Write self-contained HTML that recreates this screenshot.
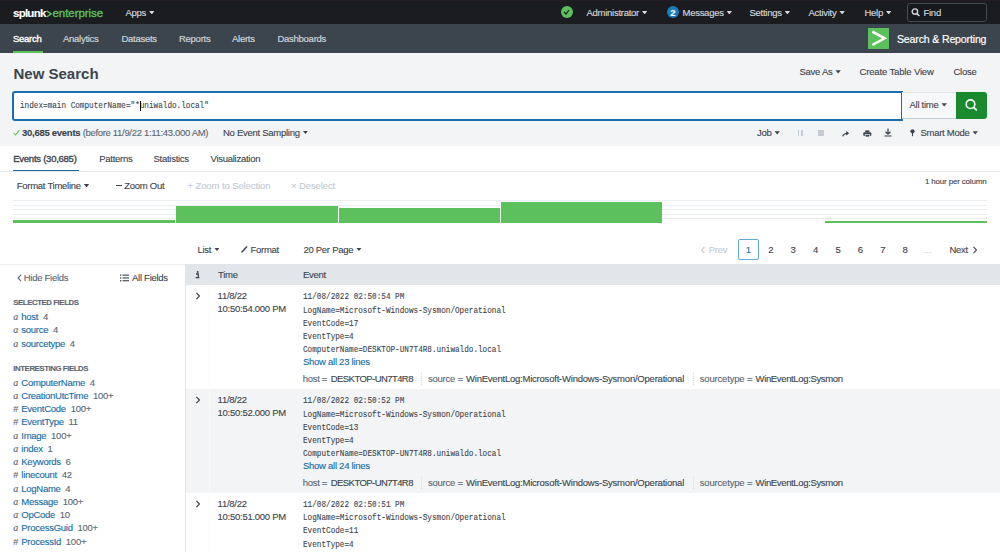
<!DOCTYPE html>
<html><head><meta charset="utf-8">
<style>
*{margin:0;padding:0;box-sizing:border-box}
html,body{width:1000px;height:552px;overflow:hidden;background:#fff;font-family:"Liberation Sans",sans-serif;font-size:9.5px;letter-spacing:-0.27px;color:#3c444d;-webkit-text-stroke:0.12px currentColor}
.a{position:absolute;white-space:nowrap;line-height:12px}
.m{font-family:"Liberation Mono",monospace;font-size:9.6px;letter-spacing:0;color:#3c444d;transform:scaleX(0.8);transform-origin:0 0}
.car{display:inline-block;width:5.4px;height:3.4px;background:currentColor;clip-path:polygon(0 0,100% 0,50% 100%);vertical-align:middle;margin-left:3px;position:relative;top:-0.6px}
#top{position:absolute;left:0;top:0;width:1000px;height:24px;background:#1a1c20}
#nav{position:absolute;left:0;top:24px;width:1000px;height:29px;background:#3c444d}
#pg{position:absolute;left:0;top:53px;width:1000px;height:93px;background:#f2f4f5}
.tb{color:#d3d8dd;-webkit-text-stroke:0.15px #d3d8dd}
.nv{color:#cdd3d9;-webkit-text-stroke:0.2px #cdd3d9}
.lk{color:#166ca5}
.mu{color:#5c6773}
</style></head><body>
<div id="top"></div><div style="position:absolute;left:0;top:0;width:1000px;height:1px;background:#221e24"></div>
<div id="nav"></div>
<div id="pg"></div>

<!-- top bar -->
<div class="a" style="left:13px;top:6.5px;font-size:11.5px;font-weight:700;letter-spacing:-0.75px;color:#fff">splunk</div>
<svg style="position:absolute;left:46px;top:10px" width="6" height="8" viewBox="0 0 6 8"><path d="M0.6 0.8 L5.2 3.9 L0.6 7" stroke="#5cc05c" stroke-width="1.4" fill="none"/></svg>
<div class="a" style="left:52.5px;top:6.5px;font-size:11.5px;letter-spacing:-0.05px;color:#5cc05c;-webkit-text-stroke:0.35px #5cc05c">enterprise</div>
<div class="a tb" style="left:125.5px;top:6.8px">Apps<span class="car"></span></div>

<div style="position:absolute;left:560.5px;top:6px;width:12px;height:12px;border-radius:50%;background:#5cc05c"></div>
<svg style="position:absolute;left:563px;top:9px" width="7" height="6" viewBox="0 0 7 6"><path d="M1 3 L3 5 L6 1" stroke="#1a1c20" stroke-width="1.2" fill="none"/></svg>
<div class="a tb" style="left:586.5px;top:6.8px">Administrator<span class="car"></span></div>
<div style="position:absolute;left:666.5px;top:5.8px;width:12.5px;height:12.5px;border-radius:50%;background:#1a7bbd;color:#fff;font-size:9.5px;font-weight:700;line-height:13.5px;text-align:center">2</div>
<div class="a tb" style="left:682.5px;top:6.8px">Messages<span class="car"></span></div>
<div class="a tb" style="left:749.5px;top:6.8px">Settings<span class="car"></span></div>
<div class="a tb" style="left:808.5px;top:6.8px">Activity<span class="car"></span></div>
<div class="a tb" style="left:864.5px;top:6.8px">Help<span class="car"></span></div>
<div style="position:absolute;left:907px;top:3px;width:80px;height:19px;border:1px solid #454c55;border-radius:3px;background:#171a1d"></div>
<svg style="position:absolute;left:911px;top:8px" width="10" height="10" viewBox="0 0 10 10"><circle cx="3.9" cy="3.6" r="2.7" stroke="#d3d8dd" stroke-width="1.4" fill="none"/><path d="M5.9 5.6 L8.4 8" stroke="#d3d8dd" stroke-width="1.6"/></svg>
<div class="a tb" style="left:923.5px;top:6.8px">Find</div>

<!-- nav -->
<div class="a" style="left:13px;top:32.5px;color:#fff;-webkit-text-stroke:0.35px #fff">Search</div>
<div style="position:absolute;left:12.5px;top:51px;width:30px;height:2px;background:#5cc05c"></div>
<div class="a nv" style="left:63px;top:32.5px">Analytics</div>
<div class="a nv" style="left:121.5px;top:32.5px">Datasets</div>
<div class="a nv" style="left:179px;top:32.5px">Reports</div>
<div class="a nv" style="left:232px;top:32.5px">Alerts</div>
<div class="a nv" style="left:277.5px;top:32.5px">Dashboards</div>
<div style="position:absolute;left:868px;top:28px;width:21px;height:21px;background:#5cc05c"></div>
<svg style="position:absolute;left:868px;top:28px" width="21" height="21" viewBox="0 0 21 21"><path d="M4.3 3.6 L16.6 10.3 L4.3 17" stroke="#fff" stroke-width="2.5" fill="none"/></svg>
<div class="a" style="left:897px;top:32.6px;color:#fff;font-size:10.5px;letter-spacing:-0.13px;-webkit-text-stroke:0.2px #fff">Search &amp; Reporting</div>


<!-- page header -->
<div class="a" style="left:13.5px;top:65px;font-size:15px;font-weight:700;letter-spacing:0;line-height:18px;-webkit-text-stroke:0">New Search</div>
<div class="a" style="left:799.5px;top:66px">Save As<span class="car"></span></div>
<div class="a" style="left:859.5px;top:66px;letter-spacing:-0.15px">Create Table View</div>
<div class="a" style="left:953.5px;top:66px">Close</div>

<div style="position:absolute;left:11.5px;top:90.5px;width:891px;height:30px;border:2px solid #1a6fae;border-radius:3px 0 0 3px;background:#fff"></div>
<div class="a m" style="left:19.5px;top:100.2px">index=main ComputerName="*uniwaldo.local"</div>
<div style="position:absolute;left:140px;top:100.5px;width:1px;height:10.5px;background:#000"></div>
<div style="position:absolute;left:902px;top:92px;width:55px;height:26.5px;background:#f7f8fa;border-top:1px solid #e1e6eb;border-bottom:1px solid #c3cbd4"></div>
<div class="a" style="left:909.5px;top:99px">All time<span class="car"></span></div>
<div style="position:absolute;left:956.3px;top:92px;width:30.7px;height:26.5px;background:#1a8a2e;border-radius:0 3px 3px 0"></div>
<svg style="position:absolute;left:963px;top:97px" width="16" height="16" viewBox="0 0 16 16"><circle cx="7.5" cy="7.2" r="4.3" stroke="#fff" stroke-width="1.6" fill="none"/><path d="M10.6 10.3 L13.8 13.4" stroke="#fff" stroke-width="1.8"/></svg>

<svg style="position:absolute;left:12.5px;top:129px" width="7" height="7" viewBox="0 0 7 7"><path d="M0.7 4 L2.5 6 L6.3 1" stroke="#5cc05c" stroke-width="1.1" fill="none"/></svg>
<div class="a" style="left:22px;top:126.5px"><b>30,685 events</b> <span class="mu" style="letter-spacing:-0.32px">(before 11/9/22 1:11:43.000 AM)</span></div>
<div class="a" style="left:223px;top:126.5px">No Event Sampling<span class="car"></span></div>
<div class="a" style="left:757px;top:127px">Job<span class="car"></span></div>
<div style="position:absolute;left:797.5px;top:129.5px;width:1.5px;height:6px;background:#c3cbd4"></div>
<div style="position:absolute;left:801px;top:129.5px;width:1.5px;height:6px;background:#c3cbd4"></div>
<div style="position:absolute;left:818px;top:129.5px;width:6px;height:6px;background:#c3cbd4"></div>
<svg style="position:absolute;left:841.5px;top:130px" width="8" height="7" viewBox="0 0 8 7"><path d="M0.8 6.3 Q1.5 3.3 5.5 3.3" stroke="#3c444d" stroke-width="1.3" fill="none"/><path d="M4.2 1 L7.2 3.3 L4.2 5.6 Z" fill="#3c444d"/></svg>
<svg style="position:absolute;left:862.5px;top:129.5px" width="9" height="8" viewBox="0 0 9 8"><rect x="2.2" y="0.4" width="4.2" height="2" fill="#3c444d"/><rect x="0.3" y="2.3" width="8" height="3.6" rx="1" fill="#3c444d"/><rect x="2.2" y="4.6" width="4.2" height="2.4" fill="#3c444d" stroke="#f2f4f5" stroke-width="0.7"/></svg>
<svg style="position:absolute;left:883.5px;top:128px" width="8" height="9" viewBox="0 0 8 9"><path d="M4 0.5 V6 M1.5 3.8 L4 6.2 L6.5 3.8 M0.5 8 H7.5" stroke="#3c444d" stroke-width="1.2" fill="none"/></svg>
<svg style="position:absolute;left:910px;top:129px" width="5" height="8" viewBox="0 0 5 8"><circle cx="2.5" cy="2.3" r="2.1" fill="#3c444d"/><path d="M2.5 3.5 V7.2" stroke="#3c444d" stroke-width="1.1"/></svg>
<div class="a" style="left:920.5px;top:127px">Smart Mode<span class="car"></span></div>

<!-- tabs -->
<div class="a" style="left:13.25px;top:153px;letter-spacing:-0.25px;-webkit-text-stroke:0.35px #3c444d">Events (30,685)</div>
<div style="position:absolute;left:12.5px;top:169.5px;width:66.5px;height:2px;background:#1a6fae"></div>
<div class="a" style="left:99.25px;top:153px">Patterns</div>
<div class="a" style="left:153.5px;top:153px">Statistics</div>
<div class="a" style="left:210.5px;top:153px">Visualization</div>
<div style="position:absolute;left:0;top:171.2px;width:1000px;height:1px;background:#e3e7eb"></div>

<!-- timeline toolbar -->
<div class="a" style="left:16.75px;top:179.8px">Format Timeline<span class="car"></span></div>
<div style="position:absolute;left:115.75px;top:184.8px;width:6px;height:1.2px;background:#3c444d"></div>
<div class="a" style="left:124.25px;top:179.8px">Zoom Out</div>
<div class="a" style="left:187.5px;top:179.8px;color:#c3cbd4;letter-spacing:-0.1px">+ Zoom to Selection</div>
<div class="a" style="left:291px;top:179.8px;color:#c3cbd4;letter-spacing:-0.1px">&#215; Deselect</div>
<div class="a" style="left:925px;top:176.2px;font-size:8px;letter-spacing:-0.18px">1 hour per column</div>

<!-- timeline -->
<div style="position:absolute;left:13px;top:200px;width:974px;height:1px;background:#eceff2"></div>
<div style="position:absolute;left:13px;top:204.6px;width:974px;height:1px;background:#eceff2"></div>
<div style="position:absolute;left:13px;top:209.2px;width:974px;height:1px;background:#eceff2"></div>
<div style="position:absolute;left:13px;top:213.8px;width:974px;height:1px;background:#eceff2"></div>
<div style="position:absolute;left:13px;top:218.4px;width:974px;height:1px;background:#eceff2"></div>
<div style="position:absolute;left:13px;top:220.3px;width:162px;height:2.7px;background:#5cc05c"></div>
<div style="position:absolute;left:175.8px;top:205.6px;width:162px;height:17.4px;background:#5cc05c"></div>
<div style="position:absolute;left:338.6px;top:208px;width:161px;height:15px;background:#5cc05c"></div>
<div style="position:absolute;left:500.8px;top:202.4px;width:161.2px;height:20.6px;background:#5cc05c"></div>
<div style="position:absolute;left:825.4px;top:220.6px;width:161.6px;height:2.4px;background:#5cc05c"></div>

<!-- results toolbar -->
<div class="a" style="left:197.5px;top:243.5px">List<span class="car"></span></div>
<svg style="position:absolute;left:240.5px;top:245px" width="7" height="8" viewBox="0 0 7 8"><path d="M1 7 L6 1.5" stroke="#3c444d" stroke-width="1.5"/><path d="M0.5 7.5 L1.5 6" stroke="#3c444d" stroke-width="1"/></svg>
<div class="a" style="left:250.5px;top:243.5px">Format</div>
<div class="a" style="left:303.4px;top:243.5px">20 Per Page<span class="car"></span></div>

<svg style="position:absolute;left:699.5px;top:246px" width="6" height="8" viewBox="0 0 6 8"><path d="M4.5 0.8 L1.5 4 L4.5 7.2" stroke="#c3cbd4" stroke-width="1.1" fill="none"/></svg>
<div class="a" style="left:708.8px;top:243.5px;color:#c3cbd4">Prev</div>
<div style="position:absolute;left:737.6px;top:239px;width:21.4px;height:21px;border:1px solid #5fa9d9;border-radius:2px"></div>
<div class="a" style="left:737.6px;top:243.5px;width:21.4px;text-align:center;color:#1a6fae">1</div>
<div class="a" style="left:760px;top:243.5px;width:21.4px;text-align:center">2</div>
<div class="a" style="left:782.4px;top:243.5px;width:21.4px;text-align:center">3</div>
<div class="a" style="left:804.8px;top:243.5px;width:21.4px;text-align:center">4</div>
<div class="a" style="left:827.2px;top:243.5px;width:21.4px;text-align:center">5</div>
<div class="a" style="left:849.6px;top:243.5px;width:21.4px;text-align:center">6</div>
<div class="a" style="left:872px;top:243.5px;width:21.4px;text-align:center">7</div>
<div class="a" style="left:894.4px;top:243.5px;width:21.4px;text-align:center">8</div>
<div class="a" style="left:916.8px;top:243.5px;width:21.4px;text-align:center;color:#c3cbd4">...</div>
<div class="a" style="left:949.4px;top:243.5px">Next</div>
<svg style="position:absolute;left:972px;top:246px" width="6" height="8" viewBox="0 0 6 8"><path d="M1.5 0.8 L4.5 4 L1.5 7.2" stroke="#3c444d" stroke-width="1.1" fill="none"/></svg>


<!-- table -->
<div style="position:absolute;left:186px;top:264px;width:814px;height:22px;background:#e1e6eb"></div>
<svg style="position:absolute;left:195px;top:270.5px" width="5" height="8" viewBox="0 0 5 8"><circle cx="2.6" cy="1.1" r="1" fill="#3c444d"/><path d="M1 3 H3.3 V6.4 M0.6 6.7 H4.4" stroke="#3c444d" stroke-width="1.3" fill="none"/></svg>
<div class="a" style="left:218px;top:268.5px">Time</div>
<div class="a" style="left:303px;top:268.5px">Event</div>
<div style="position:absolute;left:186px;top:285px;width:814px;height:104px;background:#fff;"></div>
<div style="position:absolute;left:209px;top:286px;width:1px;height:103px;background:#f9fafa"></div>
<svg style="position:absolute;left:194.5px;top:292px" width="6" height="8" viewBox="0 0 6 8"><path d="M1.3 0.8 L4.5 4 L1.3 7.2" stroke="#3c444d" stroke-width="1.2" fill="none"/></svg>
<div class="a" style="left:217.6px;top:290px">11/8/22</div>
<div class="a" style="left:217.6px;top:303.4px">10:50:54.000 PM</div>
<div class="a m" style="left:303px;top:291.2px">11/08/2022 02:50:54 PM</div>
<div class="a m" style="left:303px;top:304.5px">LogName=Microsoft-Windows-Sysmon/Operational</div>
<div class="a m" style="left:303px;top:317.8px">EventCode=17</div>
<div class="a m" style="left:303px;top:331.1px">EventType=4</div>
<div class="a m" style="left:303px;top:344.4px">ComputerName=DESKTOP-UN7T4R8.uniwaldo.local</div>
<div class="a lk" style="left:303px;top:355.6px">Show all 23 lines</div>
<div class="a mu" style="left:302.8px;top:373.0px;letter-spacing:-0.32px">host =</div>
<div class="a" style="left:330.8px;top:373.0px;letter-spacing:-0.57px">DESKTOP-UN7T4R8</div>
<div class="a mu" style="left:428px;top:373.0px;letter-spacing:-0.24px">source =</div>
<div class="a" style="left:466px;top:373.0px;letter-spacing:-0.22px">WinEventLog:Microsoft-Windows-Sysmon/Operational</div>
<div class="a mu" style="left:699.7px;top:373.0px;letter-spacing:-0.17px">sourcetype =</div>
<div class="a" style="left:755.6px;top:373.0px;letter-spacing:-0.36px">WinEventLog:Sysmon</div>
<div style="position:absolute;left:421.2px;top:372.1px;width:0;height:13px;border-left:1px dotted #d5dbe0"></div>
<div style="position:absolute;left:692.6px;top:372.1px;width:0;height:13px;border-left:1px dotted #d5dbe0"></div>
<div style="position:absolute;left:186px;top:389px;width:814px;height:104px;background:#f2f4f5;"></div>
<div style="position:absolute;left:209px;top:390px;width:1px;height:103px;background:#f9fafa"></div>
<svg style="position:absolute;left:194.5px;top:396px" width="6" height="8" viewBox="0 0 6 8"><path d="M1.3 0.8 L4.5 4 L1.3 7.2" stroke="#3c444d" stroke-width="1.2" fill="none"/></svg>
<div class="a" style="left:217.6px;top:394px">11/8/22</div>
<div class="a" style="left:217.6px;top:407.4px">10:50:52.000 PM</div>
<div class="a m" style="left:303px;top:395.2px">11/08/2022 02:50:52 PM</div>
<div class="a m" style="left:303px;top:408.5px">LogName=Microsoft-Windows-Sysmon/Operational</div>
<div class="a m" style="left:303px;top:421.8px">EventCode=13</div>
<div class="a m" style="left:303px;top:435.1px">EventType=4</div>
<div class="a m" style="left:303px;top:448.4px">ComputerName=DESKTOP-UN7T4R8.uniwaldo.local</div>
<div class="a lk" style="left:303px;top:459.6px">Show all 24 lines</div>
<div class="a mu" style="left:302.8px;top:477.0px;letter-spacing:-0.32px">host =</div>
<div class="a" style="left:330.8px;top:477.0px;letter-spacing:-0.57px">DESKTOP-UN7T4R8</div>
<div class="a mu" style="left:428px;top:477.0px;letter-spacing:-0.24px">source =</div>
<div class="a" style="left:466px;top:477.0px;letter-spacing:-0.22px">WinEventLog:Microsoft-Windows-Sysmon/Operational</div>
<div class="a mu" style="left:699.7px;top:477.0px;letter-spacing:-0.17px">sourcetype =</div>
<div class="a" style="left:755.6px;top:477.0px;letter-spacing:-0.36px">WinEventLog:Sysmon</div>
<div style="position:absolute;left:421.2px;top:476.1px;width:0;height:13px;border-left:1px dotted #d5dbe0"></div>
<div style="position:absolute;left:692.6px;top:476.1px;width:0;height:13px;border-left:1px dotted #d5dbe0"></div>
<div style="position:absolute;left:186px;top:492.5px;width:814px;height:104px;background:#fff;"></div>
<div style="position:absolute;left:209px;top:493.5px;width:1px;height:103px;background:#f9fafa"></div>
<svg style="position:absolute;left:194.5px;top:499.5px" width="6" height="8" viewBox="0 0 6 8"><path d="M1.3 0.8 L4.5 4 L1.3 7.2" stroke="#3c444d" stroke-width="1.2" fill="none"/></svg>
<div class="a" style="left:217.6px;top:497.5px">11/8/22</div>
<div class="a" style="left:217.6px;top:510.9px">10:50:51.000 PM</div>
<div class="a m" style="left:303px;top:498.7px">11/08/2022 02:50:51 PM</div>
<div class="a m" style="left:303px;top:512.0px">LogName=Microsoft-Windows-Sysmon/Operational</div>
<div class="a m" style="left:303px;top:525.3px">EventCode=11</div>
<div class="a m" style="left:303px;top:538.6px">EventType=4</div>
<div class="a m" style="left:303px;top:551.9px">ComputerName=DESKTOP-UN7T4R8.uniwaldo.local</div>
<div class="a lk" style="left:303px;top:563.1px">Show all 24 lines</div>
<div class="a mu" style="left:302.8px;top:580.5px;letter-spacing:-0.32px">host =</div>
<div class="a" style="left:330.8px;top:580.5px;letter-spacing:-0.57px">DESKTOP-UN7T4R8</div>
<div class="a mu" style="left:428px;top:580.5px;letter-spacing:-0.24px">source =</div>
<div class="a" style="left:466px;top:580.5px;letter-spacing:-0.22px">WinEventLog:Microsoft-Windows-Sysmon/Operational</div>
<div class="a mu" style="left:699.7px;top:580.5px;letter-spacing:-0.17px">sourcetype =</div>
<div class="a" style="left:755.6px;top:580.5px;letter-spacing:-0.36px">WinEventLog:Sysmon</div>
<div style="position:absolute;left:421.2px;top:579.6px;width:0;height:13px;border-left:1px dotted #d5dbe0"></div>
<div style="position:absolute;left:692.6px;top:579.6px;width:0;height:13px;border-left:1px dotted #d5dbe0"></div>
<div style="position:absolute;left:185px;top:264px;width:1px;height:288px;background:#e1e6eb"></div>

<!-- sidebar -->
<div style="position:absolute;left:0;top:264px;width:185px;height:1px;background:#eceff2"></div>
<div style="position:absolute;left:185px;top:264px;width:1px;height:288px;background:#e1e6eb"></div>
<svg style="position:absolute;left:16.5px;top:274px" width="5" height="8" viewBox="0 0 5 8"><path d="M4 0.8 L1 4 L4 7.2" stroke="#5c6773" stroke-width="1.1" fill="none"/></svg>
<div class="a mu" style="left:23.75px;top:272px">Hide Fields</div>
<svg style="position:absolute;left:119.5px;top:274px" width="9" height="8" viewBox="0 0 9 8"><rect x="0" y="0.5" width="1.3" height="1.3" fill="#3c444d"/><rect x="0" y="3.3" width="1.3" height="1.3" fill="#3c444d"/><rect x="0" y="6.1" width="1.3" height="1.3" fill="#3c444d"/><rect x="2.5" y="0.6" width="6.5" height="1.1" fill="#3c444d"/><rect x="2.5" y="3.4" width="6.5" height="1.1" fill="#3c444d"/><rect x="2.5" y="6.2" width="6.5" height="1.1" fill="#3c444d"/></svg>
<div class="a" style="left:132px;top:272px">All Fields</div>
<div class="a" style="left:13.3px;top:297.2px;font-size:7.8px;font-weight:700;letter-spacing:-0.42px;color:#5c6773">SELECTED FIELDS</div>
<div class="a" style="left:13.3px;top:311.0px"><span style="font-family:Liberation Serif;font-style:italic;font-size:10px;color:#5c6773;letter-spacing:0">a</span></div><div class="a" style="left:21.3px;top:311.0px"><span class="lk">host</span>&nbsp; <span class="mu">4</span></div>
<div class="a" style="left:13.3px;top:324.3px"><span style="font-family:Liberation Serif;font-style:italic;font-size:10px;color:#5c6773;letter-spacing:0">a</span></div><div class="a" style="left:21.3px;top:324.3px"><span class="lk">source</span>&nbsp; <span class="mu">4</span></div>
<div class="a" style="left:13.3px;top:337.6px"><span style="font-family:Liberation Serif;font-style:italic;font-size:10px;color:#5c6773;letter-spacing:0">a</span></div><div class="a" style="left:21.3px;top:337.6px"><span class="lk">sourcetype</span>&nbsp; <span class="mu">4</span></div>
<div class="a" style="left:13.3px;top:363.2px;font-size:7.8px;font-weight:700;letter-spacing:-0.42px;color:#5c6773">INTERESTING FIELDS</div>
<div class="a" style="left:13.3px;top:376.6px"><span style="font-family:Liberation Serif;font-style:italic;font-size:10px;color:#5c6773;letter-spacing:0">a</span></div><div class="a" style="left:21.3px;top:376.6px"><span class="lk">ComputerName</span>&nbsp; <span class="mu">4</span></div>
<div class="a" style="left:13.3px;top:389.8px"><span style="font-family:Liberation Serif;font-style:italic;font-size:10px;color:#5c6773;letter-spacing:0">a</span></div><div class="a" style="left:21.3px;top:389.8px"><span class="lk">CreationUtcTime</span>&nbsp; <span class="mu">100+</span></div>
<div class="a" style="left:13.3px;top:403.1px"><span style="font-size:9px;color:#5c6773">#</span></div><div class="a" style="left:21.3px;top:403.1px"><span class="lk">EventCode</span>&nbsp; <span class="mu">100+</span></div>
<div class="a" style="left:13.3px;top:416.4px"><span style="font-size:9px;color:#5c6773">#</span></div><div class="a" style="left:21.3px;top:416.4px"><span class="lk">EventType</span>&nbsp; <span class="mu">11</span></div>
<div class="a" style="left:13.3px;top:429.6px"><span style="font-family:Liberation Serif;font-style:italic;font-size:10px;color:#5c6773;letter-spacing:0">a</span></div><div class="a" style="left:21.3px;top:429.6px"><span class="lk">Image</span>&nbsp; <span class="mu">100+</span></div>
<div class="a" style="left:13.3px;top:442.8px"><span style="font-family:Liberation Serif;font-style:italic;font-size:10px;color:#5c6773;letter-spacing:0">a</span></div><div class="a" style="left:21.3px;top:442.8px"><span class="lk">index</span>&nbsp; <span class="mu">1</span></div>
<div class="a" style="left:13.3px;top:456.1px"><span style="font-family:Liberation Serif;font-style:italic;font-size:10px;color:#5c6773;letter-spacing:0">a</span></div><div class="a" style="left:21.3px;top:456.1px"><span class="lk">Keywords</span>&nbsp; <span class="mu">6</span></div>
<div class="a" style="left:13.3px;top:469.4px"><span style="font-size:9px;color:#5c6773">#</span></div><div class="a" style="left:21.3px;top:469.4px"><span class="lk">linecount</span>&nbsp; <span class="mu">42</span></div>
<div class="a" style="left:13.3px;top:482.6px"><span style="font-family:Liberation Serif;font-style:italic;font-size:10px;color:#5c6773;letter-spacing:0">a</span></div><div class="a" style="left:21.3px;top:482.6px"><span class="lk">LogName</span>&nbsp; <span class="mu">4</span></div>
<div class="a" style="left:13.3px;top:495.8px"><span style="font-family:Liberation Serif;font-style:italic;font-size:10px;color:#5c6773;letter-spacing:0">a</span></div><div class="a" style="left:21.3px;top:495.8px"><span class="lk">Message</span>&nbsp; <span class="mu">100+</span></div>
<div class="a" style="left:13.3px;top:509.1px"><span style="font-family:Liberation Serif;font-style:italic;font-size:10px;color:#5c6773;letter-spacing:0">a</span></div><div class="a" style="left:21.3px;top:509.1px"><span class="lk">OpCode</span>&nbsp; <span class="mu">10</span></div>
<div class="a" style="left:13.3px;top:522.4px"><span style="font-family:Liberation Serif;font-style:italic;font-size:10px;color:#5c6773;letter-spacing:0">a</span></div><div class="a" style="left:21.3px;top:522.4px"><span class="lk">ProcessGuid</span>&nbsp; <span class="mu">100+</span></div>
<div class="a" style="left:13.3px;top:535.6px"><span style="font-size:9px;color:#5c6773">#</span></div><div class="a" style="left:21.3px;top:535.6px"><span class="lk">ProcessId</span>&nbsp; <span class="mu">100+</span></div>
<div class="a" style="left:13.3px;top:548.8px"><span style="font-family:Liberation Serif;font-style:italic;font-size:10px;color:#5c6773;letter-spacing:0">a</span></div><div class="a" style="left:21.3px;top:548.8px"><span class="lk">punct</span>&nbsp; <span class="mu">100+</span></div>
</body></html>
